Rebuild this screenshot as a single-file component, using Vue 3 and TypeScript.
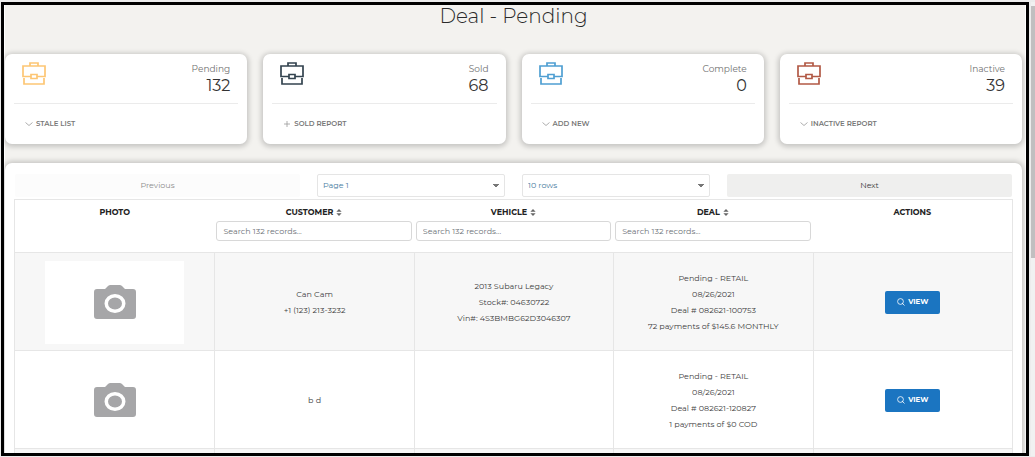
<script setup lang="ts">
import { ref } from 'vue'

interface Stat {
  label: string
  value: number
  action: string
  icon: 'chevron' | 'plus'
  tone: string
}

interface Deal {
  customer: string[]
  vehicle: string[]
  deal: string[]
}

const stats: Stat[] = [
  { label: 'Pending', value: 132, action: 'STALE LIST', icon: 'chevron', tone: 'amber' },
  { label: 'Sold', value: 68, action: 'SOLD REPORT', icon: 'plus', tone: 'navy' },
  { label: 'Complete', value: 0, action: 'ADD NEW', icon: 'chevron', tone: 'blue' },
  { label: 'Inactive', value: 39, action: 'INACTIVE REPORT', icon: 'chevron', tone: 'red' },
]

const searchable = ['CUSTOMER', 'VEHICLE', 'DEAL']
const filters = ref<string[]>(['', '', ''])

const deals: Deal[] = [
  {
    customer: ['Can Cam', '+1 (123) 213-3232'],
    vehicle: ['2013 Subaru Legacy', 'Stock#: 04630722', 'Vin#: 4S3BMBG62D3046307'],
    deal: ['Pending - RETAIL', '08/26/2021', 'Deal # 082621-100753', '72 payments of $145.6 MONTHLY'],
  },
  {
    customer: ['b d'],
    vehicle: [],
    deal: ['Pending - RETAIL', '08/26/2021', 'Deal # 082621-120827', '1 payments of $0 COD'],
  },
]
</script>

<template>
  <div class="screen">
    <main class="frame">
      <h1>Deal - Pending</h1>

      <section class="stats">
        <article v-for="s in stats" :key="s.label" class="card">
          <div class="card-top">
            <svg class="case" :class="s.tone" viewBox="0 0 24 24" aria-hidden="true">
              <path d="M8 4V1h8v3M9 14.500H1V4h22v10.500h-8M2 16v6h20v-6M9 12.500h6v4H9z" />
            </svg>
            <div class="figures">
              <span class="label">{{ s.label }}</span>
              <span class="value">{{ s.value }}</span>
            </div>
          </div>
          <a href="#" class="card-link">
            <svg viewBox="0 0 8 8" aria-hidden="true">
              <path v-if="s.icon === 'plus'" d="M4 1v6M1 4h6" />
              <path v-else d="M0.500 2.500l3.500 3 3.500-3" />
            </svg>
            {{ s.action }}
          </a>
        </article>
      </section>

      <section class="panel">
        <div class="pager">
          <button class="prev" type="button" disabled>Previous</button>
          <select aria-label="Page">
            <option>Page 1</option>
          </select>
          <select aria-label="Rows per page">
            <option>10 rows</option>
          </select>
          <button class="next" type="button">Next</button>
        </div>

        <table>
          <thead>
            <tr>
              <th scope="col">PHOTO</th>
              <th v-for="(name, i) in searchable" :key="name" scope="col">
                <span class="sort">
                  {{ name }}
                  <svg viewBox="0 0 6 8" aria-hidden="true">
                    <path d="M0 3.200L3 0l3 3.200zM0 4.800L3 8l3-3.200z" />
                  </svg>
                </span>
                <input
                  v-model="filters[i]"
                  type="text"
                  placeholder="Search 132 records..."
                  :aria-label="'Search ' + name"
                />
              </th>
              <th scope="col">ACTIONS</th>
            </tr>
          </thead>
          <tbody>
            <tr v-for="(d, i) in deals" :key="i">
              <td>
                <div class="photo">
                  <svg viewBox="0 0 42 34" aria-hidden="true">
                    <path
                      fill-rule="evenodd"
                      d="M3 4h8l3-3q1-1 2.500-1h9q1.500 0 2.500 1l3 3h8q3 0 3 3v24q0 3-3 3H3q-3 0-3-3V7q0-3 3-3zM21 9a10.500 9.500 0 1 0 0 19a10.500 9.500 0 1 0 0-19z"
                    />
                    <ellipse cx="21" cy="18.500" rx="7" ry="6" />
                  </svg>
                </div>
              </td>
              <td><div v-for="t in d.customer" :key="t">{{ t }}</div></td>
              <td><div v-for="t in d.vehicle" :key="t">{{ t }}</div></td>
              <td><div v-for="t in d.deal" :key="t">{{ t }}</div></td>
              <td>
                <button class="view" type="button">
                  <svg viewBox="0 0 8 8" aria-hidden="true">
                    <circle cx="3.500" cy="3.500" r="2.900" />
                    <path d="M5 5L7.500 7.500" />
                  </svg>
                  VIEW
                </button>
              </td>
            </tr>
            <tr>
              <td></td>
              <td></td>
              <td></td>
              <td></td>
              <td></td>
            </tr>
          </tbody>
        </table>
      </section>
    </main>
    <div class="scrollbar"><div class="thumb"></div></div>
  </div>
</template>

<style>
body {
  margin: 0;
  overflow: hidden;
}
</style>

<style scoped>
.screen {
  display: flex;
  gap: 2px;
  box-sizing: border-box;
  height: 100vh;
  padding: 2px 0 1px 1px;
  background: #ececec;
  color: #3c3c3c;
  font-family: Montserrat, Inter, "Liberation Sans", sans-serif;
  font-size: 8px;
}
.frame {
  flex: 1;
  box-sizing: border-box;
  min-width: 0;
  overflow: hidden;
  padding: 0 4px 0 1px;
  border: 3px solid #000;
  background: #f3f2ef;
  box-shadow: inset -1px 0 #fff, inset 1px 0 #fff;
}
.scrollbar {
  width: 4px;
  padding-top: 4px;
  background: #f1f1f1;
}
.thumb {
  height: 56%;
  background: #c1bfc0;
}
h1 {
  margin: 0;
  color: #2a2a2a;
  font-size: 20px;
  font-weight: 300;
  line-height: 22px;
  text-align: center;
}
.stats {
  display: grid;
  grid-template-columns: repeat(4, 1fr);
  gap: 16px;
  margin-top: 27px;
}
.card {
  box-sizing: border-box;
  height: 90px;
  padding: 0 9px;
  border-radius: 7px;
  background: #fff;
  box-shadow: 0 1px 5px 2px rgba(0, 0, 0, 0.18);
}
.card-top {
  display: flex;
  justify-content: space-between;
  height: 49px;
  padding: 0 8px;
  border-bottom: 1px solid #ebebeb;
}
.case {
  width: 24px;
  height: 24px;
  margin-top: 8px;
  fill: none;
  stroke: currentColor;
  stroke-width: 1.7;
}
.amber { color: #fdc674; }
.navy { color: #33434f; }
.blue { color: #4f9fd2; }
.red { color: #b25a46; }
.figures {
  display: flex;
  flex-direction: column;
  align-items: flex-end;
  padding-top: 7px;
}
.label {
  color: #707070;
  font-size: 9px;
  line-height: 15px;
}
.value {
  color: #333;
  font-size: 16px;
  line-height: 20px;
}
.card-link {
  display: flex;
  align-items: center;
  gap: 3px;
  height: 39px;
  padding-left: 11px;
  color: #777;
  font-size: 7px;
  font-weight: 600;
  text-decoration: none;
}
.card-link svg {
  width: 8px;
  height: 8px;
  fill: none;
  stroke: #999;
  stroke-width: 0.8;
}
.panel {
  margin-top: 19px;
  padding: 11px 9px 0;
  border-radius: 7px 7px 0 0;
  background: #fff;
  box-shadow: 0 0 5px 2px rgba(0, 0, 0, 0.18);
}
.pager {
  display: grid;
  grid-template-columns: 285fr 188fr 188fr 285fr;
  gap: 17px;
  padding: 0 1px;
}
.pager button,
.pager select {
  box-sizing: border-box;
  height: 23px;
  font: inherit;
  border-radius: 2px;
}
.pager button {
  padding: 0 0 1px;
  border: 0;
  background: #efefee;
  color: #3c3c3c;
}
.pager .prev {
  background: #fcfcfc;
  color: #8c8c8c;
}
.pager select {
  appearance: none;
  width: 100%;
  padding: 0 5px 1px;
  border: 1px solid #e5e5e5;
  background-color: #fff;
  background-image:
    linear-gradient(to top right, transparent 40%, #777 40%),
    linear-gradient(to top left, transparent 40%, #777 40%);
  background-position: right 8px top 9px, right 5px top 9px;
  background-repeat: no-repeat;
  background-size: 3px 3px;
  color: #45799e;
}
table {
  width: 100%;
  margin-top: 2px;
  border: 1px solid #e6e6e6;
  border-collapse: separate;
  border-spacing: 0;
  table-layout: fixed;
  text-align: center;
}
th {
  box-sizing: border-box;
  height: 53px;
  padding: 5px 2px 0;
  border-bottom: 1px solid #e6e6e6;
  color: #222;
  font-size: 8px;
  font-weight: 700;
  line-height: 14px;
  vertical-align: top;
}
.sort {
  display: flex;
  align-items: center;
  justify-content: center;
  gap: 3px;
}
.sort svg {
  width: 6px;
  height: 7px;
  fill: #666;
}
th input {
  display: block;
  box-sizing: border-box;
  width: 100%;
  height: 20px;
  margin-top: 2px;
  padding: 0 6px;
  border: 1px solid #d8d8d8;
  border-radius: 3px;
  color: #555;
  font: inherit;
  font-weight: 400;
}
th input::placeholder {
  color: #6b7076;
  opacity: 1;
}
td {
  box-sizing: border-box;
  height: 98px;
  padding: 1px 0 0;
  border-bottom: 1px solid #e6e6e6;
  line-height: 16px;
}
td + td {
  border-left: 1px solid #e6e6e6;
}
tbody tr:nth-child(odd) {
  background: #f7f7f7;
}
.photo {
  display: flex;
  align-items: center;
  justify-content: center;
  width: 70%;
  height: 83px;
  margin: 0 auto;
  background: #fff;
}
.photo svg {
  width: 42px;
  height: 34px;
  fill: #a6a6a8;
}
.view {
  display: inline-flex;
  align-items: center;
  justify-content: center;
  gap: 3px;
  width: 55px;
  height: 23px;
  padding: 0;
  border: 0;
  border-radius: 2px;
  background: #1b75c1;
  color: #fff;
  font: inherit;
  font-size: 7px;
  font-weight: 700;
}
.view svg {
  width: 8px;
  height: 8px;
  fill: none;
  stroke: #fff;
  stroke-width: 0.8;
}
</style>
